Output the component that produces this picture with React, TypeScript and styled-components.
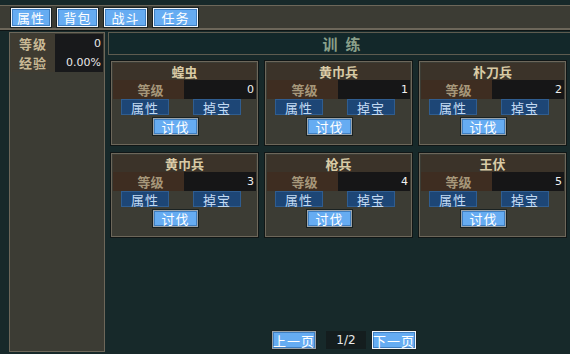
import React from "react";
import styled, { createGlobalStyle } from "styled-components";

const Global = createGlobalStyle`
  html, body { margin: 0; padding: 0; background: #17292a; }
  body { width: 570px; height: 354px; overflow: hidden; font-family: "Noto Sans CJK SC", "Noto Sans", sans-serif; }
`;

const Page = styled.div`
  width: 570px;
  height: 354px;
  background: #17292a;
  display: flex;
  flex-direction: column;
  padding-top: 5px;
  box-sizing: border-box;
`;

const TopBar = styled.div`
  height: 22px;
  background: #3c3c34;
  border-top: 1px solid #6d675a;
  border-bottom: 2px solid #6d675a;
  box-shadow: 0 1px 0 #0e1414;
  display: flex;
  align-items: center;
  gap: 6px;
  padding-left: 11px;
`;

const BlueButton = styled.button<{ $w: number; $h: number; $active?: boolean }>`
  width: ${(p) => p.$w}px;
  height: ${(p) => p.$h}px;
  box-sizing: border-box;
  padding: 0;
  margin: 0;
  background: #66acf2;
  color: #ffffff;
  font-family: "Noto Sans CJK SC", sans-serif;
  font-size: 13px;
  line-height: 1;
  border: 1px solid ${(p) => (p.$active ? "#f2f6fa" : "#9aa4ac")};
  outline: 1px solid #1a2222;
  box-shadow: inset 0 0 0 1px #3f7ec0;
  display: flex;
  align-items: center;
  justify-content: center;
  letter-spacing: 1px;
`;

const Body = styled.div`
  flex: 1;
  display: flex;
  gap: 3px;
  padding: 2px 0 2px 9px;
  min-height: 0;
`;

const SidePanel = styled.div`
  width: 96px;
  background: #3c3c34;
  border: 1px solid #6d675a;
  box-sizing: border-box;
  display: flex;
  flex-direction: column;
  padding: 1px 1px 0 1px;
`;

const StatRow = styled.div`
  display: grid;
  grid-template-columns: 44px 48px;
  height: 19px;
`;

const StatLabel = styled.div`
  background: #3f3b31;
  color: #c9b995;
  font-size: 13px;
  font-weight: bold;
  display: flex;
  align-items: center;
  justify-content: center;
  letter-spacing: 1px;
`;

const StatValue = styled.div`
  background: #18191b;
  color: #e8e8e8;
  font-family: "DejaVu Sans", sans-serif;
  font-size: 11px;
  display: flex;
  align-items: center;
  justify-content: flex-end;
  padding-right: 2px;
`;

const Main = styled.div`
  flex: 1;
  display: flex;
  flex-direction: column;
`;

const TitleBar = styled.div`
  height: 23px;
  background: #13282a;
  border: 1px solid #5e5c50;
  border-right: none;
  box-sizing: border-box;
  color: #8aa08a;
  font-size: 15px;
  font-weight: bold;
  letter-spacing: 8px;
  display: flex;
  align-items: center;
  justify-content: center;
  padding-left: 12px;
`;

const Grid = styled.div`
  display: grid;
  grid-template-columns: repeat(3, 147px);
  grid-auto-rows: 84px;
  column-gap: 7px;
  row-gap: 8px;
  padding: 6px 0 0 3px;
`;

const Card = styled.div`
  background: #3c3c34;
  border: 1px solid #6d675a;
  outline: 1px solid #101616;
  box-sizing: border-box;
  display: flex;
  flex-direction: column;
  align-items: center;
  padding: 1px;
`;

const CardName = styled.div`
  width: 100%;
  height: 17px;
  background: #3b3329;
  color: #d9cba6;
  font-size: 13px;
  font-weight: bold;
  display: flex;
  align-items: center;
  justify-content: center;
`;

const LevelRow = styled.div`
  width: 100%;
  height: 16px;
  display: grid;
  grid-template-columns: 71px 1fr;
`;

const LevelLabel = styled.div`
  background: #3e2d21;
  color: #a6977a;
  font-size: 13px;
  font-weight: bold;
  display: flex;
  align-items: center;
  justify-content: center;
  padding-left: 4px;
`;

const LevelValue = styled.div`
  background: #161617;
  color: #f0f0f0;
  font-family: "DejaVu Sans", sans-serif;
  font-size: 11px;
  display: flex;
  align-items: center;
  justify-content: flex-end;
  padding-right: 2px;
`;

const ActionRow = styled.div`
  display: flex;
  gap: 24px;
  margin-top: 3px;
  padding-right: 7px;
`;

const DarkButton = styled.button`
  width: 48px;
  height: 16px;
  padding: 0;
  box-sizing: border-box;
  background: #1d4676;
  border: 1px solid #2f5d90;
  color: #c2daf2;
  font-family: "Noto Sans CJK SC", sans-serif;
  font-size: 13px;
  line-height: 1;
  display: flex;
  align-items: center;
  justify-content: center;
  letter-spacing: 1px;
`;

const FightWrap = styled.div`
  margin-top: 3px;
  padding-right: 18px;
`;

const Pager = styled.div`
  margin-top: auto;
  margin-bottom: 3px;
  display: flex;
  justify-content: center;
  align-items: center;
  gap: 10px;
  padding-left: 10px;
`;

const PageNum = styled.div`
  width: 40px;
  height: 18px;
  background: #141d1e;
  color: #e8e8e8;
  font-family: "DejaVu Sans", sans-serif;
  font-size: 12px;
  display: flex;
  align-items: center;
  justify-content: center;
  margin-right: -4px;
`;

const monsters = [
  { name: "蝗虫", lv: 0 },
  { name: "黄巾兵", lv: 1 },
  { name: "朴刀兵", lv: 2 },
  { name: "黄巾兵", lv: 3 },
  { name: "枪兵", lv: 4 },
  { name: "王伏", lv: 5 },
];

export default function App() {
  return (
    <Page>
      <Global />
      <TopBar>
        <BlueButton $w={40} $h={19} $active>属性</BlueButton>
        <BlueButton $w={41} $h={19} $active>背包</BlueButton>
        <BlueButton $w={43} $h={19} $active>战斗</BlueButton>
        <BlueButton $w={45} $h={19} $active>任务</BlueButton>
      </TopBar>
      <Body>
        <SidePanel>
          <StatRow>
            <StatLabel>等级</StatLabel>
            <StatValue>0</StatValue>
          </StatRow>
          <StatRow>
            <StatLabel>经验</StatLabel>
            <StatValue>0.00%</StatValue>
          </StatRow>
        </SidePanel>
        <Main>
          <TitleBar>训练</TitleBar>
          <Grid>
            {monsters.map((m, i) => (
              <Card key={i}>
                <CardName>{m.name}</CardName>
                <LevelRow>
                  <LevelLabel>等级</LevelLabel>
                  <LevelValue>{m.lv}</LevelValue>
                </LevelRow>
                <ActionRow>
                  <DarkButton>属性</DarkButton>
                  <DarkButton>掉宝</DarkButton>
                </ActionRow>
                <FightWrap>
                  <BlueButton $w={45} $h={17}>讨伐</BlueButton>
                </FightWrap>
              </Card>
            ))}
          </Grid>
          <Pager>
            <BlueButton $w={44} $h={18}>上一页</BlueButton>
            <PageNum>1/2</PageNum>
            <BlueButton $w={44} $h={18} $active>下一页</BlueButton>
          </Pager>
        </Main>
      </Body>
    </Page>
  );
}
